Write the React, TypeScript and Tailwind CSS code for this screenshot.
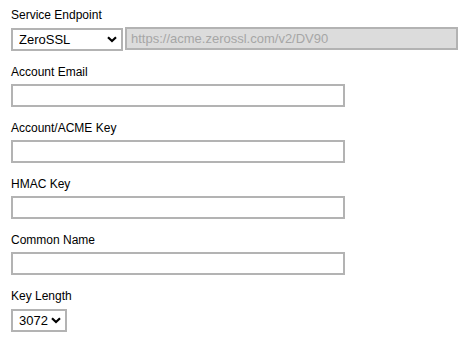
import { useState } from 'react';

function Chevron() {
  return (
    <svg
      width="10"
      height="7"
      viewBox="0 0 10 7"
      className="pointer-events-none absolute right-[6px] top-[9px]"
    >
      <path d="M1 1.2 L5 5 L9 1.2" fill="none" stroke="#000" strokeWidth="2.2" />
    </svg>
  );
}

function Field({ label, children }: { label: string; children: React.ReactNode }) {
  return (
    <div className="mb-[13px]">
      <label className="block text-[12px] leading-[16px] text-black mb-[4px]">{label}</label>
      {children}
    </div>
  );
}

const inputClass =
  'block w-[334px] h-[23px] border-2 border-[#b3b3b3] bg-white px-[4px] text-[13px] outline-none';

export default function App() {
  const [endpoint, setEndpoint] = useState('ZeroSSL');
  const [keyLength, setKeyLength] = useState('3072');

  return (
    <div className="bg-white w-[470px] h-[345px] pl-[11px] pt-[7px] font-['Liberation_Sans',Arial,sans-serif]">
      <Field label="Service Endpoint">
        <div className="flex gap-[2px]">
          <div className="relative">
            <select
              value={endpoint}
              onChange={(e) => setEndpoint(e.target.value)}
              className="appearance-none w-[112px] h-[23px] border-2 border-[#b3b3b3] bg-white pl-[6px] text-[13px] text-black outline-none"
            >
              <option>ZeroSSL</option>
              <option>Let's Encrypt</option>
              <option>Custom</option>
            </select>
            <Chevron />
          </div>
          <input
            disabled
            value="https://acme.zerossl.com/v2/DV90"
            readOnly
            className="w-[333px] h-[23px] border-2 border-[#b3b3b3] bg-[#dcdcdc] px-[4px] text-[13px] text-[#a6a6a6] outline-none"
          />
        </div>
      </Field>

      <Field label="Account Email">
        <input type="text" className={inputClass} />
      </Field>

      <Field label="Account/ACME Key">
        <input type="text" className={inputClass} />
      </Field>

      <Field label="HMAC Key">
        <input type="text" className={inputClass} />
      </Field>

      <Field label="Common Name">
        <input type="text" className={inputClass} />
      </Field>

      <Field label="Key Length">
        <div className="relative w-[56px]">
          <select
            value={keyLength}
            onChange={(e) => setKeyLength(e.target.value)}
            className="appearance-none w-[56px] h-[23px] border-2 border-[#b3b3b3] bg-white pl-[6px] text-[13px] text-black outline-none"
          >
            <option>2048</option>
            <option>3072</option>
            <option>4096</option>
          </select>
          <Chevron />
        </div>
      </Field>
    </div>
  );
}
